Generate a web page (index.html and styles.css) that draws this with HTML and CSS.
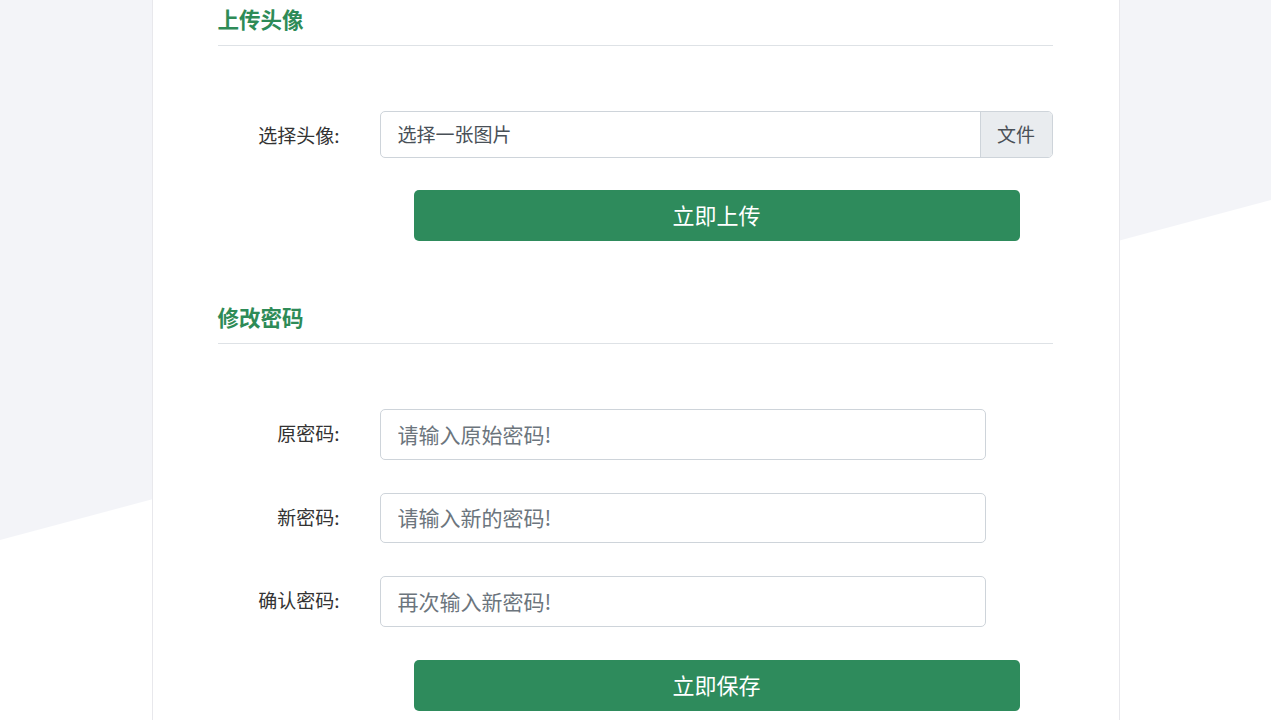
FILE: index.html
```html
<!DOCTYPE html>
<html lang="zh-CN">
<head>
  <meta charset="UTF-8">
  <meta name="viewport" content="width=device-width, initial-scale=1.0">
  <title>个人设置</title>
  <link rel="stylesheet" href="styles.css">
</head>
<body>

  <div class="card">
    <!-- 上传头像 -->
    <h3 class="section-title">上传头像</h3>
    <form class="setting-form avatar-form">
      <div class="form-row">
        <label class="form-label">选择头像:</label>
        <div class="file-box">
          <span class="file-text">选择一张图片</span>
          <span class="file-btn">文件</span>
        </div>
      </div>
      <div class="form-row">
        <button type="button" class="btn-green">立即上传</button>
      </div>
    </form>

    <!-- 修改密码 -->
    <h3 class="section-title">修改密码</h3>
    <form class="setting-form">
      <div class="form-row">
        <label class="form-label">原密码:</label>
        <input type="password" class="text-input" placeholder="请输入原始密码!">
      </div>
      <div class="form-row">
        <label class="form-label">新密码:</label>
        <input type="password" class="text-input" placeholder="请输入新的密码!">
      </div>
      <div class="form-row">
        <label class="form-label">确认密码:</label>
        <input type="password" class="text-input" placeholder="再次输入新密码!">
      </div>
      <div class="form-row">
        <button type="button" class="btn-green">立即保存</button>
      </div>
    </form>
  </div>

</body>
</html>
```

FILE: styles.css
```css
    html, body {
      margin: 0;
      padding: 0;
    }

    body {
      background-color: #fff;
      font-family: "Noto Sans CJK SC", "Noto Sans", sans-serif;
      color: #333;
    }

    /* 斜切的灰色背景 */
    body::before {
      content: "";
      position: fixed;
      top: 0;
      left: 0;
      right: 0;
      bottom: 0;
      background-color: #f3f4f8;
      clip-path: polygon(0 0, 100% 0, 100% 200px, 0 540px);
      z-index: -1;
    }

    .card {
      box-sizing: border-box;
      width: 968px;
      min-height: 760px;
      margin: 0 auto;
      padding: 6px 66px 0 65px;
      background-color: #fff;
      border-left: 1px solid #e8e8ec;
      border-right: 1px solid #e8e8ec;
    }

    .section-title {
      margin: 0;
      padding-bottom: 13px;
      font-size: 21.5px;
      line-height: 26px;
      font-weight: bold;
      color: #2e8b57;
      border-bottom: 1px solid #dee2e6;
    }

    .setting-form {
      margin: 65px 0 63px;
    }

    .form-row {
      display: flex;
      align-items: center;
      margin-bottom: 33px;
    }

    .avatar-form .form-row {
      margin-bottom: 32px;
    }

    .setting-form .form-row:last-child {
      margin-bottom: 0;
    }

    .form-label {
      width: 122px;
      margin-right: 40px;
      padding-bottom: 3px;
      text-align: right;
      font-size: 19px;
      color: #333;
    }

    .avatar-form .form-label {
      padding-bottom: 1px;
    }

    .file-box {
      box-sizing: border-box;
      display: flex;
      width: 673px;
      height: 47px;
      border: 1px solid #ced4da;
      border-radius: 5px;
      overflow: hidden;
      font-size: 19px;
    }

    .file-text {
      flex: 1;
      padding-left: 17px;
      line-height: 44px;
      color: #495057;
    }

    .file-btn {
      width: 71px;
      text-align: center;
      line-height: 44px;
      color: #495057;
      background-color: #e9ecef;
      border-left: 1px solid #ced4da;
    }

    .text-input {
      box-sizing: border-box;
      width: 606px;
      height: 50.5px;
      padding: 0 17px 1px;
      font-family: inherit;
      font-size: 21px;
      color: #495057;
      border: 1px solid #ced4da;
      border-radius: 5px;
      outline: none;
    }

    .text-input::placeholder {
      color: #6c757d;
    }

    .btn-green {
      width: 606px;
      height: 51px;
      margin-left: 196px;
      padding: 0 0 3px;
      font-family: inherit;
      font-size: 22px;
      color: #fff;
      background-color: #2e8b5c;
      border: none;
      border-radius: 5px;
      cursor: pointer;
    }
```
